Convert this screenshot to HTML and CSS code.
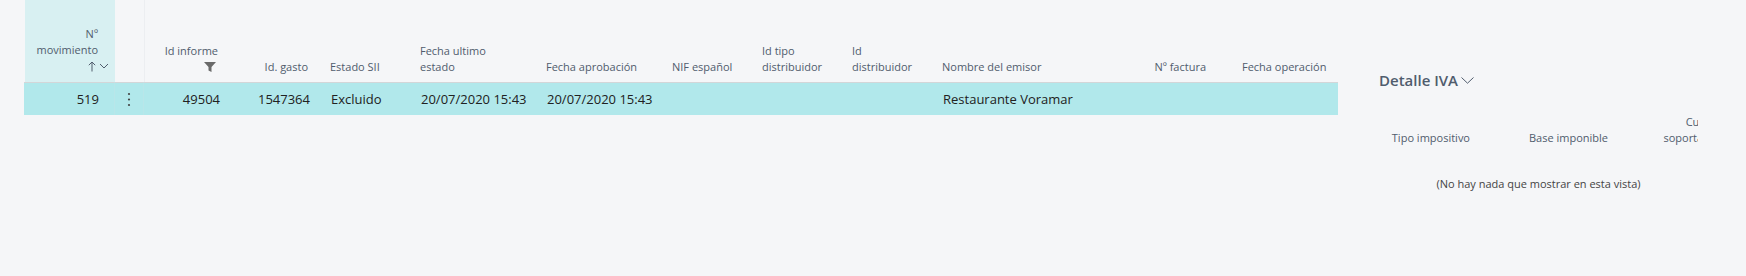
FILE: index.html
```html
<!DOCTYPE html>
<html lang="es">
<head>
<meta charset="utf-8">
<title>Movimientos SII</title>
<link rel="stylesheet" href="styles.css">
</head>
<body>
<div class="page">
  <div class="grid">
    <div class="hcell sorted right">
      <div class="hlabel">Nº<br>movimiento</div>
      <div class="hicons">
        <svg width="8" height="11" viewBox="0 0 8 11"><path d="M4 10.5V1M0.8 4.2L4 1L7.2 4.2" fill="none" stroke="#505c6d" stroke-width="1"/></svg>
        <svg width="10" height="6" viewBox="0 0 10 6"><path d="M1 1L5 5L9 1" fill="none" stroke="#505c6d" stroke-width="1"/></svg>
      </div>
    </div>
    <div class="hcell"></div>
    <div class="hcell right sep">
      <div class="hlabel">Id informe</div>
      <div class="hicons filt">
        <svg width="12" height="10" viewBox="0 0 12 10"><path d="M0 0H12L7.5 5V10L4.5 8.5V5Z" fill="#6a6a6a"/></svg>
      </div>
    </div>
    <div class="hcell right"><div class="hlabel">Id. gasto</div></div>
    <div class="hcell"><div class="hlabel">Estado SII</div></div>
    <div class="hcell"><div class="hlabel">Fecha ultimo<br>estado</div></div>
    <div class="hcell"><div class="hlabel">Fecha aprobación</div></div>
    <div class="hcell"><div class="hlabel">NIF español</div></div>
    <div class="hcell"><div class="hlabel">Id tipo<br>distribuidor</div></div>
    <div class="hcell"><div class="hlabel">Id<br>distribuidor</div></div>
    <div class="hcell"><div class="hlabel">Nombre del emisor</div></div>
    <div class="hcell right wide"><div class="hlabel">Nº factura</div></div>
    <div class="hcell"><div class="hlabel">Fecha operación</div></div>

    <div class="dcell right first">519</div>
    <div class="dcell kebab"><svg width="4" height="15" viewBox="0 0 4 15"><circle cx="2" cy="2" r="1.1" fill="#444"/><circle cx="2" cy="7.5" r="1.1" fill="#444"/><circle cx="2" cy="13" r="1.1" fill="#444"/></svg></div>
    <div class="dcell right">49504</div>
    <div class="dcell right">1547364</div>
    <div class="dcell">Excluido</div>
    <div class="dcell">20/07/2020 15:43</div>
    <div class="dcell">20/07/2020 15:43</div>
    <div class="dcell"></div>
    <div class="dcell"></div>
    <div class="dcell"></div>
    <div class="dcell">Restaurante Voramar</div>
    <div class="dcell right wide"></div>
    <div class="dcell"></div>
  </div>

  <aside class="panel">
    <div class="ptitle">Detalle IVA
      <svg width="13" height="7" viewBox="0 0 13 7"><path d="M0.5 0.5L6.5 6.2L12.5 0.5" fill="none" stroke="#505c6d" stroke-width="1"/></svg>
    </div>
    <div class="phead">
      <div class="pcol c1">Tipo impositivo</div>
      <div class="pcol c2">Base imponible</div>
      <div class="pcol c3">Cuota<br>soportada</div>
    </div>
    <div class="empty">(No hay nada que mostrar en esta vista)</div>
  </aside>
</div>
</body>
</html>
```

FILE: styles.css
```css
* { box-sizing: border-box; }

html, body {
  margin: 0;
  padding: 0;
  background: #f5f6f8;
}

body {
  font-family: "Open Sans", "Noto Sans", sans-serif;
  color: #212121;
  width: 1746px;
  height: 276px;
  overflow: hidden;
}

.page {
  display: flex;
  align-items: flex-start;
  padding-left: 24px;
}

.grid {
  display: grid;
  grid-template-columns: 91px 29px 84px 90px 90px 126px 126px 90px 90px 90px 200px 100px 108px;
  grid-template-rows: 82px 33px;
}

.hcell {
  display: flex;
  flex-direction: column;
  justify-content: flex-end;
  align-items: flex-start;
  padding: 0 10px 7px 12px;
  font-size: 11px;
  line-height: 16px;
  color: #505c6d;
}

.hcell.right {
  align-items: flex-end;
  text-align: right;
}

.hcell.sorted {
  background: #d8f0f2;
  margin-left: 1px;
  padding-right: 6px;
  padding-bottom: 8px;
}

.hcell.sorted .hlabel {
  padding-right: 11px;
}

.hcell.sep {
  border-left: 1px solid #eceef1;
}

.hcell.wide {
  padding-right: 24px;
}

.hicons {
  display: flex;
  align-items: center;
  gap: 3px;
  height: 16px;
}

.hicons.filt {
  padding-right: 2px;
}

.dcell {
  display: flex;
  align-items: center;
  padding: 0 8px 0 13px;
  background: #b1e8eb;
  border-top: 1px solid #d3d6d8;
  font-size: 13px;
  white-space: nowrap;
}

.dcell.right {
  justify-content: flex-end;
}

.dcell.first {
  padding-right: 15px;
  border-right: 1px solid #b9e6e9;
}

.dcell.kebab {
  justify-content: center;
  padding: 0;
  border-right: 1px solid #b9e6e9;
}

.dcell.wide {
  padding-right: 22px;
}

.panel {
  margin-left: 41px;
  width: 319px;
  overflow: hidden;
  color: #505c6d;
}

.ptitle {
  margin-top: 69px;
  height: 22px;
  display: flex;
  align-items: center;
  gap: 3px;
  font-size: 15px;
  font-weight: 600;
  white-space: nowrap;
}

.phead {
  display: flex;
  align-items: flex-end;
  margin-top: 23px;
  width: 347px;
  font-size: 11px;
  line-height: 16px;
  color: #505c6d;
}

.pcol {
  text-align: right;
  padding-right: 10px;
  flex: none;
  white-space: nowrap;
}

.pcol.c1 { width: 101px; }
.pcol.c2 { width: 138px; }
.pcol.c3 { width: 108px; }

.empty {
  margin-top: 30px;
  text-align: center;
  font-size: 11px;
  line-height: 16px;
  color: #444;
}
```
